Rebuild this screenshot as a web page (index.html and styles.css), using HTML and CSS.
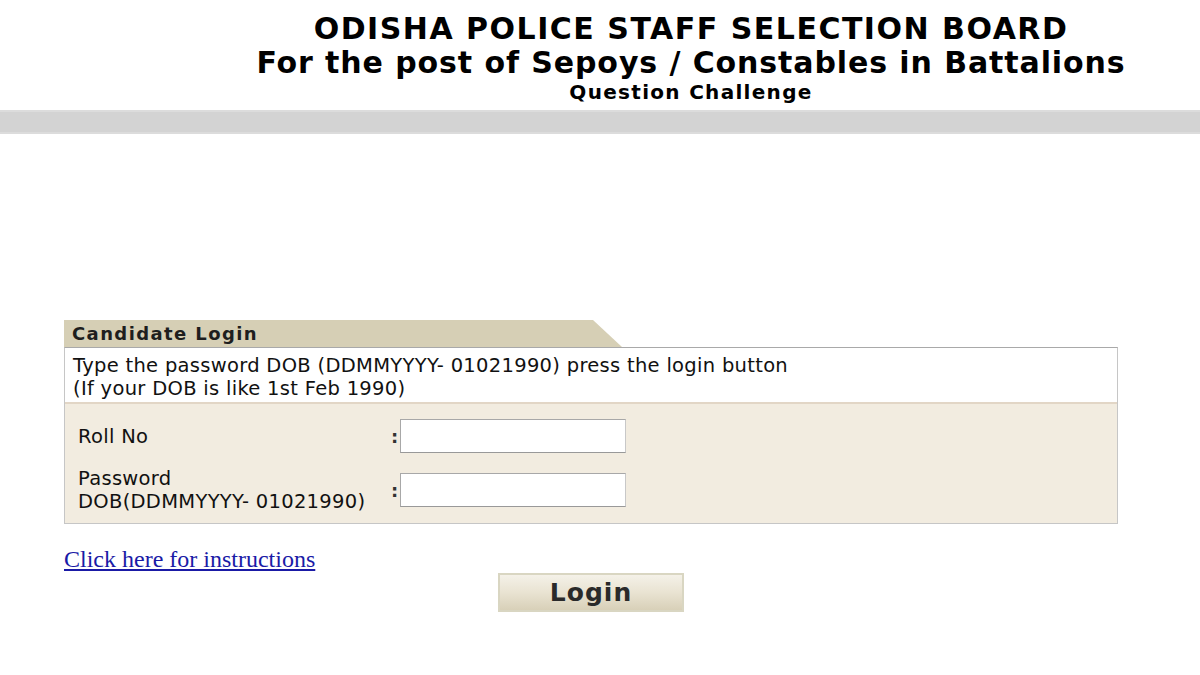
FILE: index.html
```html
<!DOCTYPE html>
<html>
<head>
<meta charset="utf-8">
<link rel="stylesheet" href="styles.css">
</head>
<body>
<div class="header">
  <div class="title1">ODISHA POLICE STAFF SELECTION BOARD</div>
  <div class="title2">For the post of Sepoys / Constables in Battalions</div>
  <div class="title3">Question Challenge</div>
</div>
<div class="graybar"></div>
<div class="main">
  <div class="tab"><span>Candidate Login</span></div>
  <div class="box">
    <div class="info">Type the password DOB (DDMMYYYY- 01021990) press the login button<br>(If your DOB is like 1st Feb 1990)</div>
    <div class="form">
      <div class="lbl">Roll No</div>
      <div class="colon">:</div>
      <input class="field" type="text">
      <div class="lbl">Password<br>DOB(DDMMYYYY- 01021990)</div>
      <div class="colon">:</div>
      <input class="field" type="password">
    </div>
  </div>
  <a class="link" href="#">Click here for instructions</a>
  <div class="btnrow"><button class="btn">Login</button></div>
</div>
</body>
</html>
```
FILE: styles.css
```css
html, body { margin: 0; padding: 0; background: #fff; }
body { font-family: "DejaVu Sans", Verdana, sans-serif; color: #111; }
.header { padding: 12px 0 0 182px; text-align: center; font-family: "DejaVu Sans", sans-serif; font-weight: bold; color: #000; height: 100px; box-sizing: border-box; }
.title1 { font-size: 30px; line-height: 34px; letter-spacing: 1.5px; }
.title2 { font-size: 30px; line-height: 34px; letter-spacing: 0.9px; }
.title3 { font-size: 20px; line-height: 24px; letter-spacing: 1.3px; }
.graybar { height: 24px; background: #d3d3d3; border-top: 2px solid #dcdcdc; border-bottom: 2px solid #dcdcdc; margin-top: 10px; box-sizing: border-box; }
.main { width: 1054px; margin: 186px 0 0 64px; }
.tab { width: 558px; height: 27px; background: #d6cfb5; clip-path: polygon(0 0, 529px 0, 558px 100%, 0 100%); box-sizing: border-box; padding: 4px 0 0 8px; line-height: 20px; }
.tab span { font-weight: bold; font-size: 18px; letter-spacing: 1.4px; color: #1e1e1e; }
.box { border: 1px solid #c6c6c6; border-top-color: #a9a9a9; }
.info { background: #fff; padding: 6px 8px 2px 8px; font-size: 19.5px; letter-spacing: 0.3px; line-height: 23px; border-bottom: 2px solid #e2d6c6; }
.form { background: #f2ece0; display: grid; grid-template-columns: 313px 9px 226px; row-gap: 14px; align-items: center; padding: 15px 0 10px 13px; }
.lbl { font-size: 19.5px; letter-spacing: 0.3px; line-height: 23px; }
.colon { font-size: 18px; font-weight: bold; color: #333; }
.field { width: 226px; height: 34px; box-sizing: border-box; border: 1px solid #a8a8a8; border-right-color: #c8c8c8; border-bottom-color: #999; background: #fff; margin: 0; }
.link { display: block; width: fit-content; margin-top: 22px; font-family: "Liberation Serif", "Times New Roman", serif; font-size: 24px; line-height: 27px; color: #1a1aa6; }
.btnrow { display: flex; justify-content: center; margin-top: 0; }
.btn { width: 186px; height: 39px; border: 2px solid #d9d6c2; background: linear-gradient(#f4f1e8, #e9e3d2 50%, #d8d0b8); font-family: "DejaVu Sans", sans-serif; font-weight: bold; font-size: 25px; color: #2a2a2a; letter-spacing: 1px; padding: 0; }
```
